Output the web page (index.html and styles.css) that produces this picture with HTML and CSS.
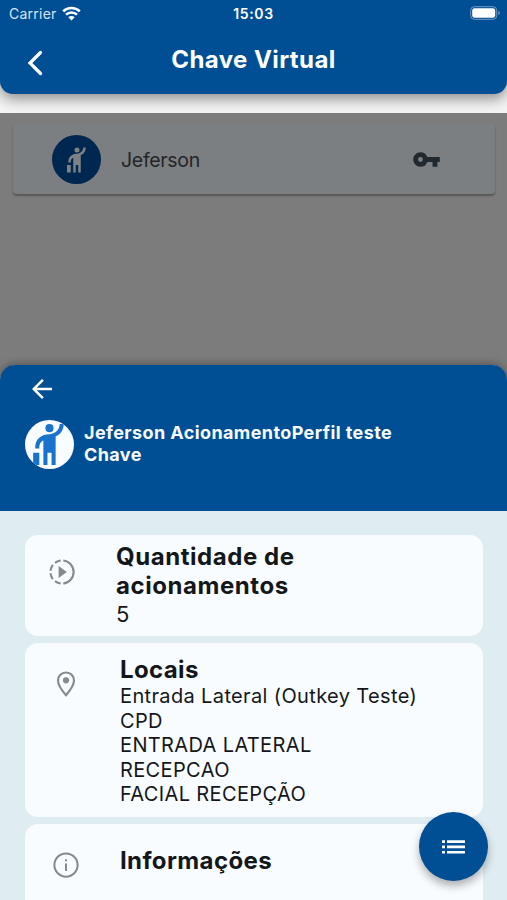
FILE: index.html
```html
<!DOCTYPE html>
<html lang="pt-BR">
<head>
<meta charset="utf-8">
<title>Chave Virtual</title>
<link rel="stylesheet" href="styles.css">
</head>
<body>
<div class="screen">
  <header class="topbar">
    <div class="status">
      <div class="carrier"><span>Carrier</span>
        <svg width="19" height="15" viewBox="0 0 19 15" fill="none" stroke="#fff" stroke-width="2.5"><path d="M1.2 5.4a11.8 11.8 0 0 1 16.6 0"/><path d="M4 8.7a7.8 7.8 0 0 1 11 0"/><path d="M9.5 14.4 6.3 11.2a4.6 4.6 0 0 1 6.4 0z" fill="#fff" stroke="none"/></svg>
      </div>
      <span class="clock">15:03</span>
      <svg class="battery" width="31" height="14" viewBox="0 0 31 14"><rect x=".7" y=".7" width="26" height="12.6" rx="3.6" fill="none" stroke="#7399c5"/><rect x="2.2" y="2.2" width="23" height="9.6" rx="2.3" fill="#fff"/><path d="M28.3 4.8c2 .8 2 3.6 0 4.4z" fill="#7399c5"/></svg>
    </div>
    <div class="titlebar">
      <svg class="back" width="18" height="28" viewBox="0 0 18 28" fill="none" stroke="#fff" stroke-width="3.2" stroke-linecap="round"><path d="M15.500 3.500 5 14l10.500 10.500"/></svg>
      <h1>Chave Virtual</h1>
    </div>
  </header>
  <main class="backdrop">
    <div class="user-card">
      <div class="avatar dark"><svg width="30" height="30" viewBox="0 0 24 24"><path d="M12 6a2 2 0 1 1 0-4 2 2 0 0 1 0 4zM17 2h2c0 .4 0 4.500-4 6.100V22h-2v-6h-2v6H9V10.100c-.3.1-.5.2-.6.3C7.800 10.800 7 11.400 7 14H5c0-2.100.4-4 2-5.300C8.300 7.500 10.100 7 12 7s5-1.700 5-5zM4 16h3v6H4z"/></svg></div>
      <span class="user-name">Jeferson</span>
      <svg class="key" width="29" height="29" viewBox="0 0 24 24"><path d="M12.650 10A5.990 5.990 0 0 0 7 6c-3.310 0-6 2.690-6 6s2.690 6 6 6a5.990 5.990 0 0 0 5.650-4H17v4h4v-4h2v-4H12.650zM7 14a2 2 0 1 1 0-4 2 2 0 0 1 0 4z"/></svg>
    </div>
  </main>
  <section class="sheet">
    <div class="sheet-head">
      <svg class="arrow" width="30" height="30" viewBox="0 0 24 24"><path d="M20 11H7.830l5.590-5.590L12 4l-8 8 8 8 1.410-1.410L7.830 13H20z"/></svg>
      <div class="profile">
        <div class="avatar light"><svg width="49" height="49" viewBox="0 0 24 24"><path d="M12 6a2 2 0 1 1 0-4 2 2 0 0 1 0 4zM17 2h2c0 .4 0 4.500-4 6.100V22h-2v-6h-2v6H9V10.100c-.3.1-.5.2-.6.3C7.800 10.800 7 11.400 7 14H5c0-2.100.4-4 2-5.300C8.300 7.500 10.100 7 12 7s5-1.700 5-5zM4 16h3v6H4z"/></svg></div>
        <h2>Jeferson AcionamentoPerfil teste<br>Chave</h2>
      </div>
    </div>
    <div class="sheet-body">
      <article class="card count">
        <svg class="icon" width="30" height="30" viewBox="0 0 24 24"><path d="M9.300 7.200v9.600l6.600-4.800z"/><g fill="none" stroke="#868a8d" stroke-width="1.700"><path d="M13 2.800a9.250 9.250 0 0 1 0 18.400M11 2.800a9.200 9.200 0 0 0-4.600 1.900M4.700 6.300A9.200 9.200 0 0 0 2.800 11M2.800 13a9.200 9.200 0 0 0 1.900 4.700M6.400 19.300a9.200 9.200 0 0 0 4.600 1.900"/></g></svg>
        <div><h3>Quantidade de<br>acionamentos</h3><p class="number">5</p></div>
      </article>
      <article class="card places">
        <svg class="icon" width="30" height="30" viewBox="0 0 24 24"><path d="M12 2.800A6.400 6.400 0 0 0 5.600 9.200C5.600 13.600 12 21 12 21s6.400-7.400 6.400-11.800A6.400 6.400 0 0 0 12 2.800z" fill="none" stroke="#868a8d" stroke-width="1.700"/><circle cx="12" cy="9" r="2.500"/></svg>
        <div>
          <h3>Locais</h3>
          <ul><li>Entrada Lateral (Outkey Teste)</li><li>CPD</li><li>ENTRADA LATERAL</li><li>RECEPCAO</li><li>FACIAL RECEPÇÃO</li></ul>
        </div>
      </article>
      <article class="card info">
        <svg class="icon" width="30" height="30" viewBox="0 0 24 24"><circle cx="12" cy="12" r="9.300" fill="none" stroke="#868a8d" stroke-width="1.600"/><path d="M11.200 7.300h1.600v1.600h-1.600zM11.200 10.800h1.600v6h-1.600z"/></svg>
        <h3>Informações</h3>
      </article>
    </div>
  </section>
  <button class="fab" aria-label="Lista"><svg width="24" height="14" viewBox="0 0 24 14" fill="#fff"><path d="M0 .3h3v2.600H0zM5 .3h18v2.600H5zM0 5.600h3v2.600H0zM5 5.600h18v2.600H5zM0 10.900h3v2.600H0zM5 10.900h18v2.600H5z"/></svg></button>
</div>
</body>
</html>
```
FILE: styles.css
```css
* { box-sizing: border-box; }
body { margin: 0; font-family: Inter, "Liberation Sans", sans-serif; color: #14171a; }
h1, h2, h3, p, ul { margin: 0; padding: 0; }
ul { list-style: none; }
svg { display: block; flex: none; }
.screen { position: relative; width: 507px; height: 900px; overflow: hidden; display: flex; flex-direction: column; background: #f4f4f4; }
.topbar { position: relative; z-index: 1; height: 94px; flex: none; background: #004e94; color: #fff; border-radius: 0 0 13px 13px; box-shadow: 0 5px 14px rgba(0,0,0,.42); }
.status { display: grid; grid-template-columns: 1fr auto 1fr; align-items: center; height: 27px; padding: 0 9px 0 9px; }
.carrier { display: flex; align-items: center; gap: 5px; font-size: 14px; letter-spacing: .25px; color: #d7e5f3; }
.carrier svg { margin-top: -1px; }
.clock { font-size: 14px; font-weight: 600; letter-spacing: .6px; }
.battery { justify-self: end; margin-right: -3px; margin-top: -1px; }
.titlebar { display: grid; grid-template-columns: 60px 1fr 60px; height: 67px; }
.back { margin: 22px 0 0 25px; }
h1 { text-align: center; font-size: 24px; line-height: 30px; font-weight: 700; padding-top: 18px; letter-spacing: .42px; }
.backdrop { height: 272px; margin: 19px 0 -20px; flex: none; background: #7c7c7c; padding: 10px 12px 10px 13px; position: relative; z-index: 2; }
.user-card { display: flex; align-items: center; height: 71px; padding: 2px 54px 0 39px; background: #7c7f81; border-radius: 4px; box-shadow: 0 2px 2px rgba(0,0,0,.3); }
.avatar { width: 49px; height: 49px; flex: none; border-radius: 50%; overflow: hidden; display: flex; align-items: center; justify-content: center; }
.dark { background: #00274f; fill: #7e8284; }
.user-name { font-size: 19.5px; color: #222529; margin-left: 20px; letter-spacing: -.3px; }
.key { margin-left: auto; fill: #202930; }
.sheet { position: relative; z-index: 3; flex: 1; display: flex; flex-direction: column; border-radius: 16px 16px 0 0; background: #dfecf1; box-shadow: 0 -1px 8px rgba(0,0,0,.35); }
.sheet-head { height: 146px; flex: none; border-radius: 15px 15px 0 0; background: #004e94; color: #f8fcff; padding: 9px 25px; }
.arrow { margin-left: 2px; fill: #fff; }
.profile { display: flex; gap: 10px; margin-top: 16px; }
.light { background: #f8fcff; fill: #1972cb; }
h2 { font-size: 18px; line-height: 22px; font-weight: 700; letter-spacing: .4px; padding-top: 2px; }
.sheet-body { padding: 24px 24px 0 25px; display: flex; flex-direction: column; gap: 7px; height: 389px; }
.card { display: flex; background: #f8fcff; border-radius: 13px; flex: none; }
.icon { fill: #868a8d; }
h3 { font-size: 24px; line-height: 29px; font-weight: 700; letter-spacing: .38px; }
.count { height: 101px; padding: 7px 0 0 22px; }
.count h3 { letter-spacing: .56px; }
.count .icon { margin: 15px 39px 0 0; }
.number { font-size: 22px; line-height: 29px; }
.places { height: 174px; padding: 12px 0 0 26px; }
.places .icon { margin: 14px 39px 0 0; }
.places ul { font-size: 20px; line-height: 24.5px; letter-spacing: .36px; }
.info { height: 110px; padding: 22px 0 0 26px; }
.info .icon { margin: 4px 39px 0 0; }
.fab { position: absolute; z-index: 4; left: 419px; top: 812px; width: 69px; height: 69px; padding: 0; border: 0; border-radius: 50%; background: #004e94; display: flex; align-items: center; justify-content: center; box-shadow: 0 5px 9px rgba(0,0,0,.3); }
```
